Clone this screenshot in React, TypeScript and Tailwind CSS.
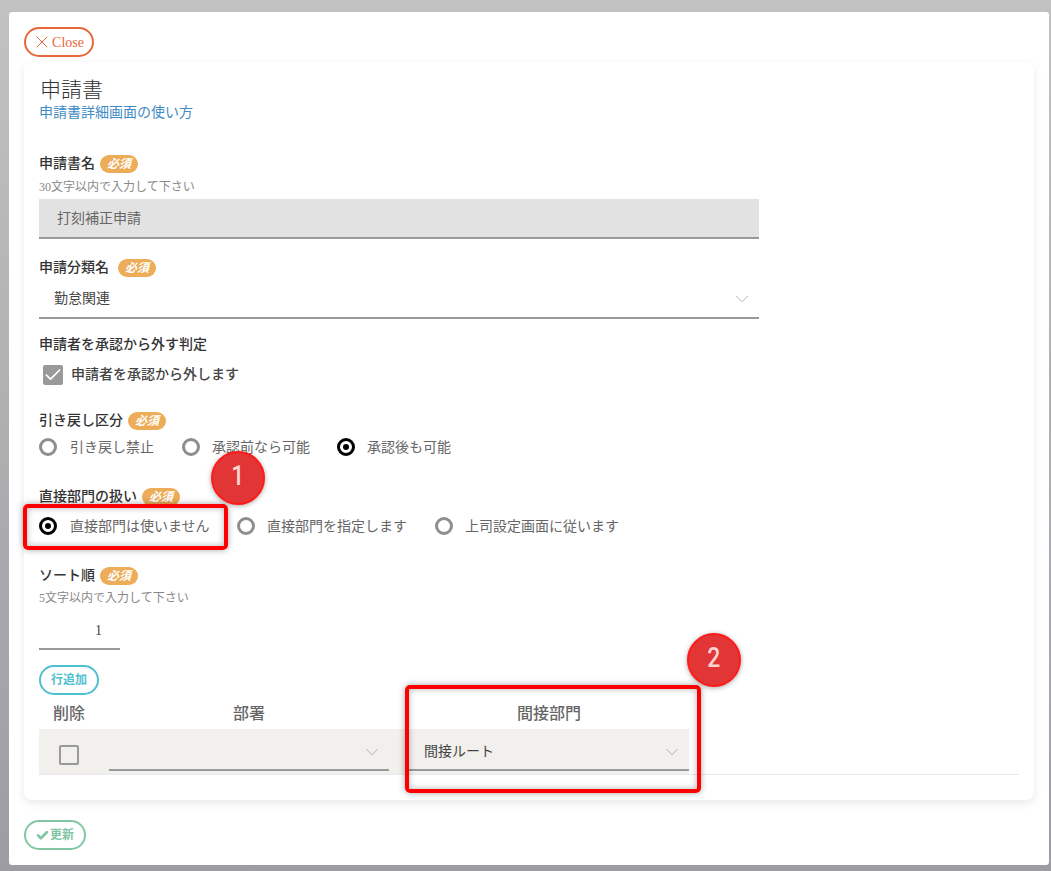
import { Check, ChevronDown, X } from "lucide-react";

const font = { fontFamily: '"Liberation Serif", "Noto Sans CJK JP", serif' };
const digitFont = { fontFamily: '"Roboto", sans-serif' };

function Required({ gap = "ml-[5px]" }: { gap?: string }) {
  return (
    <span className={`${gap} inline-flex h-[18px] w-[38px] items-center justify-center rounded-full bg-[#ecac58] text-[12px] font-bold italic text-white`}>
      必須
    </span>
  );
}

function Label({ text, required, gap }: { text: string; required?: boolean; gap?: string }) {
  return (
    <div className="flex h-[18px] items-center text-[14px] font-medium leading-[18px] text-[#333]">
      {text}
      {required && <Required gap={gap} />}
    </div>
  );
}

function Radio({ label, checked, width, gap = "ml-[12px]" }: { label: string; checked?: boolean; width: string; gap?: string }) {
  return (
    <div className={`flex items-center ${width}`}>
      {checked ? (
        <span className="flex h-[18px] w-[18px] shrink-0 items-center justify-center rounded-full border-[3px] border-black">
          <span className="h-[6px] w-[6px] rounded-full bg-black" />
        </span>
      ) : (
        <span className="h-[18px] w-[18px] shrink-0 rounded-full border-[3px] border-[#8e8e8e]" />
      )}
      <span className={`${gap} whitespace-nowrap text-[14px] text-[#666]`}>{label}</span>
    </div>
  );
}

function RowSelect({ value, className }: { value?: string; className: string }) {
  return (
    <div className={`relative flex h-[42px] w-[280px] items-center border-b-2 border-[#999] pl-[15px] pt-[4px] text-[14px] text-[#444] ${className}`}>
      {value}
      <ChevronDown size={22} strokeWidth={0.8} className="absolute right-[6px] top-[12px] text-[#999]" />
    </div>
  );
}

export default function App() {
  return (
    <div
      style={font}
      className="relative h-[871px] w-[1051px] overflow-hidden bg-gradient-to-b from-[#c2c2c2] to-[#9c9ca2] pl-[9px] pr-[2px] pt-[12px]"
    >
      <div className="h-[853px] w-[1040px] rounded-[3px] bg-white pl-[15px] pr-[15px] pt-[15px]">
        <button className="flex h-[30px] w-[70px] items-center justify-center rounded-full border-2 border-[#e8683c] text-[14px] text-[#e8683c]">
          <X size={20} strokeWidth={1.2} className="-ml-[2px]" />
          Close
        </button>

        <div className="mt-[5px] h-[738px] rounded-[8px] bg-white pl-[15px] pr-[15px] pt-[14px] shadow-[0_3px_10px_rgba(0,0,0,0.09)]">
          <h1 className="pl-[1px] text-[21px] font-light leading-[28px] text-[#333]">申請書</h1>
          <a className="block text-[14px] leading-[18px] text-[#3f8bc4]">申請書詳細画面の使い方</a>

          <div className="mt-[33px]">
            <Label text="申請書名" required />
            <div className="mt-[6px] text-[12px] leading-[16px] text-[#888]">30文字以内で入力して下さい</div>
            <div className="mt-[4px] flex h-[40px] w-[720px] items-center border-b-2 border-[#999] bg-[#e2e2e2] pl-[18px] text-[14px] text-[#666]">
              打刻補正申請
            </div>
          </div>

          <div className="mt-[20px]">
            <Label text="申請分類名" required gap="ml-[9px]" />
            <div className="relative mt-[3px] flex h-[39px] w-[720px] items-center border-b-2 border-[#999] pl-[15px] text-[14px] text-[#444]">
              勤怠関連
              <ChevronDown size={22} strokeWidth={0.8} className="absolute right-[6px] top-[8px] text-[#999]" />
            </div>
          </div>

          <div className="mt-[17px]">
            <Label text="申請者を承認から外す判定" />
            <div className="ml-[4px] mt-[10px] flex items-center">
              <span className="flex h-[20px] w-[20px] items-center justify-center rounded-[2px] bg-[#999]">
                <Check size={22} strokeWidth={2} className="text-white" />
              </span>
              <span className="ml-[8px] text-[14px] font-medium text-[#444]">申請者を承認から外します</span>
            </div>
          </div>

          <div className="mt-[27px]">
            <Label text="引き戻し区分" required />
            <div className="mt-[8px] flex h-[18px] items-center">
              <Radio label="引き戻し禁止" width="w-[143px]" gap="ml-[13px]" />
              <Radio label="承認前なら可能" width="w-[155px]" />
              <Radio checked label="承認後も可能" width="w-[150px]" />
            </div>
          </div>

          <div className="mt-[32px]">
            <Label text="直接部門の扱い" required />
            <div className="mt-[11px] flex h-[18px] items-center">
              <Radio checked label="直接部門は使いません" width="w-[198px]" gap="ml-[13px]" />
              <Radio label="直接部門を指定します" width="w-[198px]" />
              <Radio label="上司設定画面に従います" width="w-[200px]" />
            </div>
          </div>

          <div className="mt-[32px]">
            <Label text="ソート順" required />
            <div className="mt-[5px] text-[12px] leading-[16px] text-[#888]">5文字以内で入力して下さい</div>
            <div className="mt-[9px] flex h-[35px] w-[81px] items-start justify-center border-b-2 border-[#999] pl-[38px] pt-[6px] text-[14px] leading-[20px] text-[#444]">
              1
            </div>
          </div>

          <button className="mt-[15px] flex h-[30px] w-[60px] items-center justify-center rounded-full border-2 border-[#4fc0cf] text-[12px] font-bold text-[#4fc0cf]">
            行追加
          </button>

          <div className="mt-[6px] w-[980px]">
            <div className="flex h-[28px] items-center pb-[2px] text-[16px] font-medium text-[#666]">
              <div className="w-[60px] text-center">削除</div>
              <div className="w-[300px] text-center">部署</div>
              <div className="w-[280px] pl-[20px] text-center">間接部門</div>
            </div>
            <div className="border-b border-[#e8e8ee]">
              <div className="flex h-[45px] w-[650px] bg-[#f1f0ec]">
                <div className="flex w-[60px] items-center justify-center pt-[7px]">
                  <span className="h-[20px] w-[20px] rounded-[2px] border-2 border-[#999]" />
                </div>
                <RowSelect className="ml-[10px]" />
                <RowSelect value="間接ルート" className="ml-[20px]" />
              </div>
            </div>
          </div>
        </div>

        <button className="mt-[20px] flex h-[30px] w-[62px] items-center justify-center rounded-full border-2 border-[#82c6a3] text-[12px] font-bold text-[#82c6a3]">
          <Check size={13} strokeWidth={5} className="mr-[1px]" />
          更新
        </button>
      </div>

      <div className="absolute left-[23px] top-[504px] h-[46px] w-[205px] rounded-[5px] border-4 border-[#ff0000] shadow-[0_0_6px_rgba(0,0,0,0.35),inset_0_0_6px_rgba(0,0,0,0.3)]" />
      <div className="absolute left-[405px] top-[685px] h-[108px] w-[296px] rounded-[5px] border-4 border-[#ff0000] shadow-[0_0_6px_rgba(0,0,0,0.35),inset_0_0_6px_rgba(0,0,0,0.3)]" />
      <div style={digitFont} className="absolute left-[211px] top-[451px] flex h-[54px] w-[54px] items-center justify-center rounded-full border-2 border-[#ff1a1a] bg-[#e23636] pb-[4px] text-[27px] font-medium text-[#fbd4d4] shadow-[0_1px_5px_rgba(0,0,0,0.35)]">
        <span className="inline-block scale-x-[0.85]">1</span>
      </div>
      <div style={digitFont} className="absolute left-[687px] top-[633px] flex h-[54px] w-[54px] items-center justify-center rounded-full border-2 border-[#ff1a1a] bg-[#e23636] pb-[4px] text-[27px] font-medium text-[#fbd4d4] shadow-[0_1px_5px_rgba(0,0,0,0.35)]">
        <span className="inline-block scale-x-[0.85]">2</span>
      </div>
    </div>
  );
}
